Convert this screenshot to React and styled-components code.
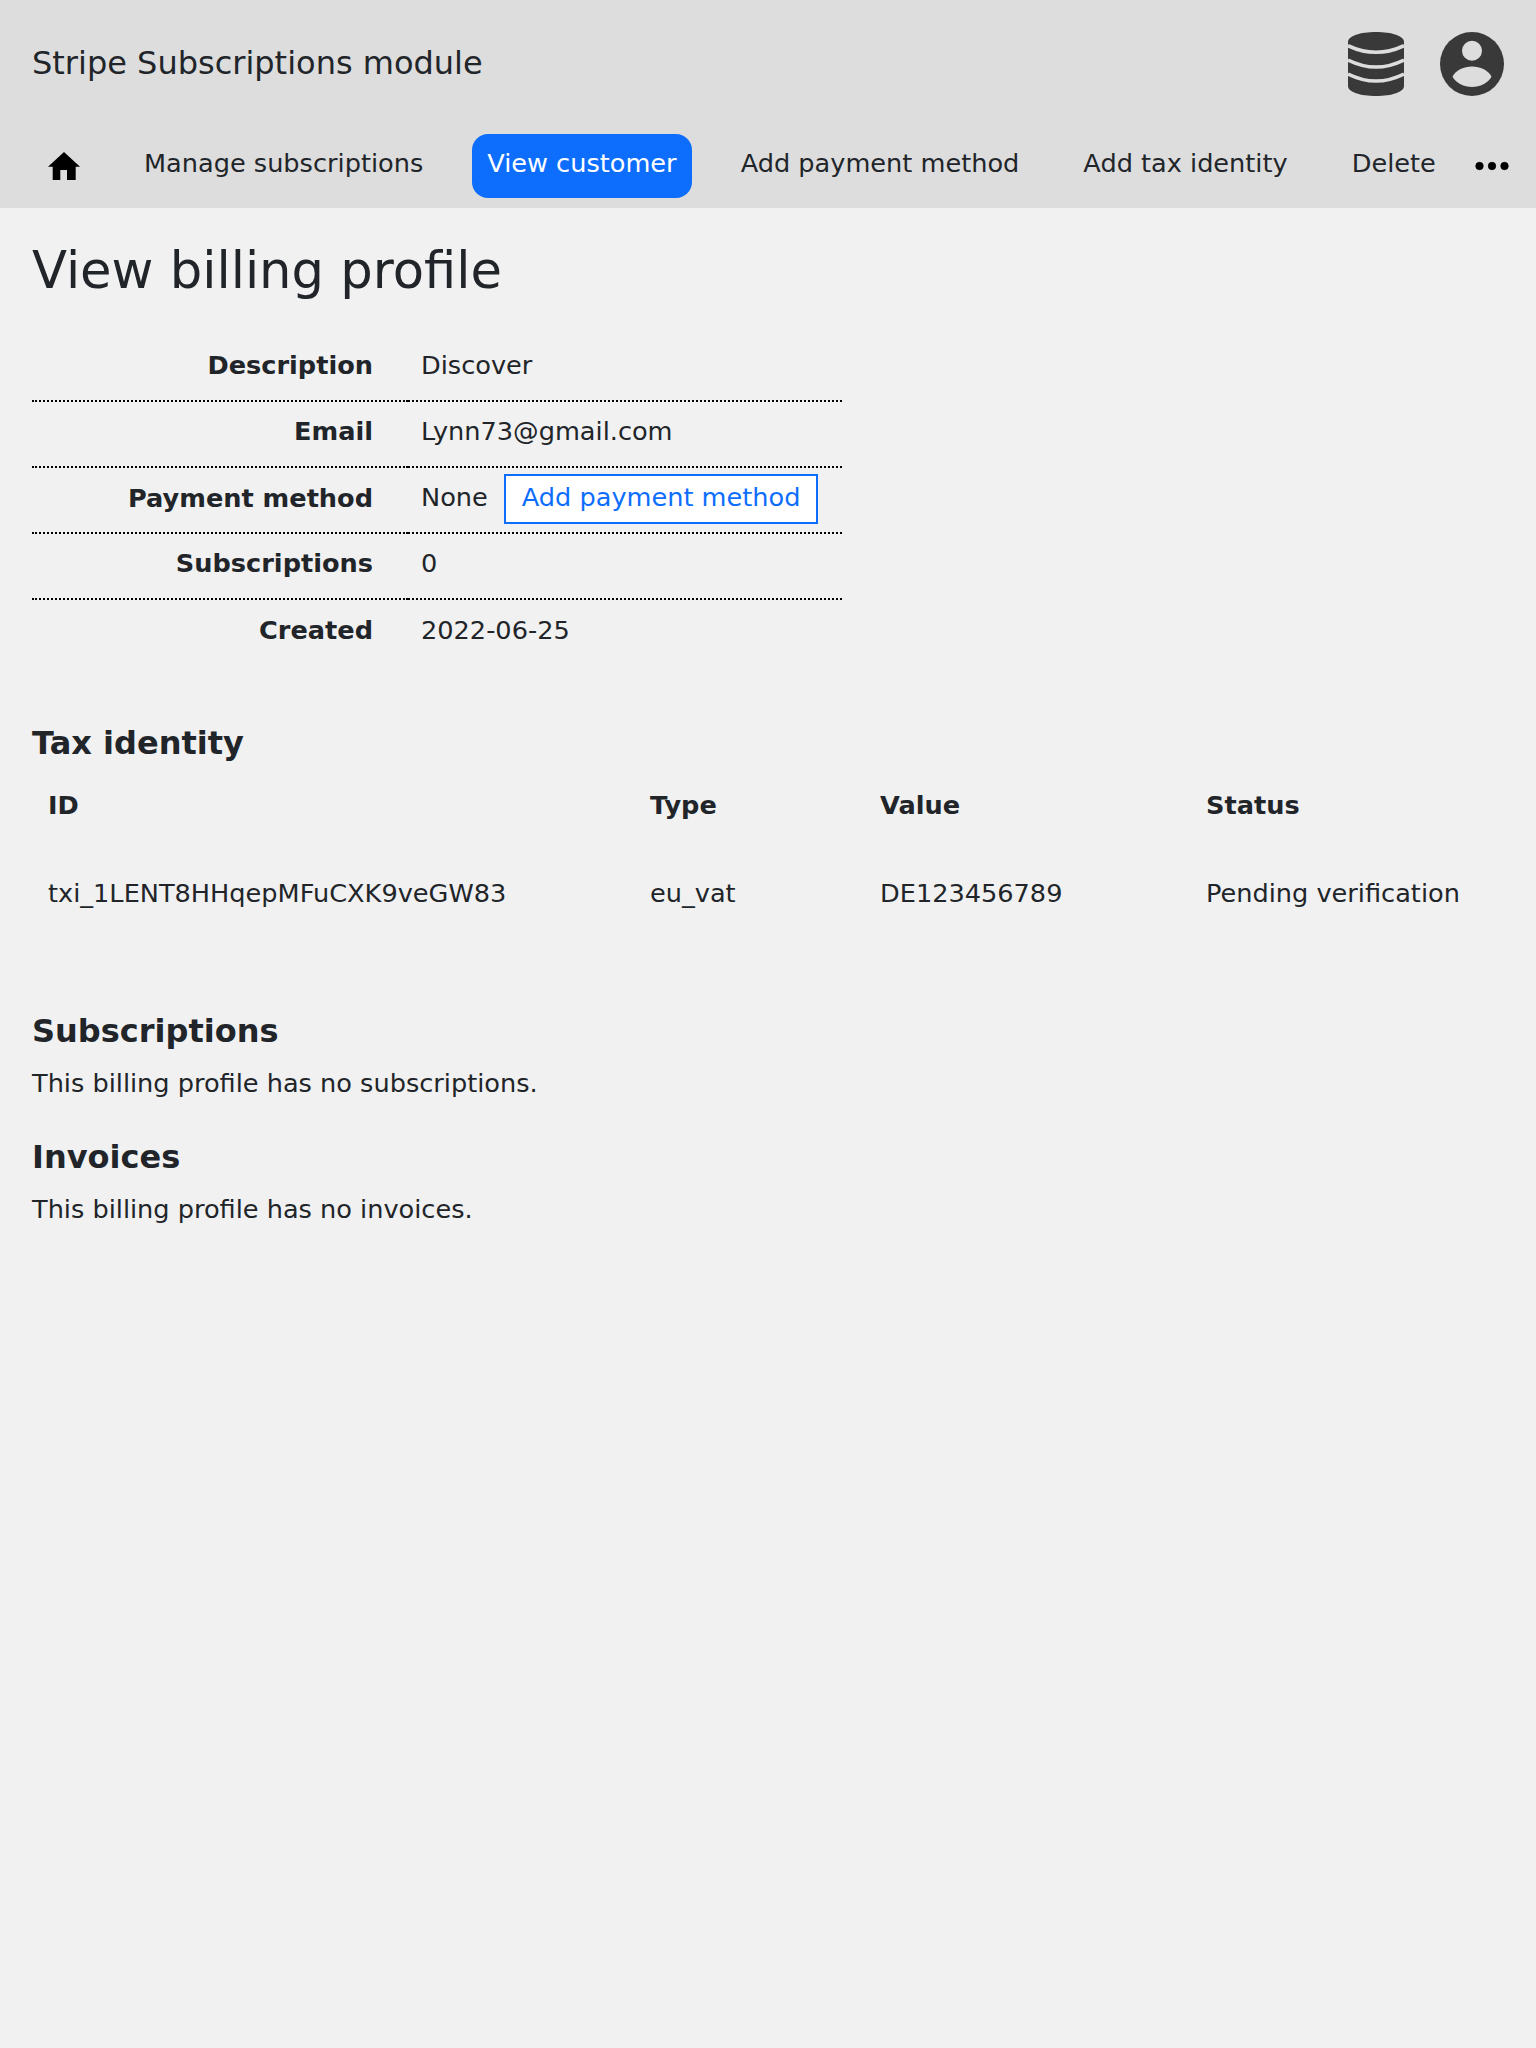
import React from "react";
import styled, { createGlobalStyle } from "styled-components";
import { BsThreeDots } from "react-icons/bs";

const GlobalStyle = createGlobalStyle`
  html, body {
    margin: 0;
    padding: 0;
    min-height: 2048px;
    background: #f1f1f1;
    color: #212529;
    font-family: "DejaVu Sans", sans-serif;
    font-size: 25.6px;
    line-height: 1.5;
  }
  * { box-sizing: border-box; }
`;

const Header = styled.header`
  background: #dddddd;
  height: 208px;
`;

const TopBar = styled.div`
  display: flex;
  align-items: center;
  justify-content: space-between;
  height: 128px;
  padding: 0 32px;
`;

const Brand = styled.div`
  padding-bottom: 2px;
  font-size: 32px;
`;

const TopIcons = styled.div`
  display: flex;
  align-items: center;
  gap: 36px;
  color: #393939;
  svg { display: block; }
`;

const Nav = styled.nav`
  display: flex;
  align-items: center;
  height: 76px;
  padding-left: 32px;
`;

const NavItem = styled.a`
  display: block;
  height: 64px;
  line-height: 58px;
  padding: 0 15px;
  margin-right: ${(p) => p.$gap}px;
  border-radius: 16px;
  white-space: nowrap;
  color: ${(p) => (p.$active ? "#fff" : "#212529")};
  background: ${(p) => (p.$active ? "#0d6efd" : "transparent")};
`;

const HomeLink = styled.a`
  display: flex;
  align-items: center;
  justify-content: center;
  width: 32px;
  margin: 0 49px 0 16px;
  color: #000;
`;

const MoreLink = styled.a`
  display: flex;
  margin-left: 21px;
  color: #000;
`;

const Main = styled.main`
  padding: 0 32px;
`;

const Title = styled.h1`
  margin: 0;
  padding-top: 32px;
  font-size: 51.2px;
  font-weight: 400;
  line-height: 1.2;
`;

const InfoTable = styled.table`
  width: 810px;
  margin-top: 34px;
  border-collapse: collapse;
`;

const InfoRow = styled.tr`
  height: 66px;
  border-bottom: 2px dotted #000;
  &:last-child { border-bottom: 0; }
`;

const InfoLabel = styled.th`
  width: 376px;
  padding: 0 35px ${(p) => p.$bottom ?? 6}px 0;
  text-align: right;
  font-weight: 700;
`;

const InfoValue = styled.td`
  padding: 0 0 ${(p) => p.$bottom ?? 6}px 13px;
`;

const OutlineButton = styled.a`
  display: inline-block;
  height: 50px;
  margin-left: 16px;
  padding: 0 16px;
  line-height: 42px;
  background: #fff;
  border: 2px solid #0d6efd;
  color: #0d6efd;
`;

const SectionTitle = styled.h2`
  margin: ${(p) => p.$top}px 0 0;
  font-size: 32px;
  font-weight: 700;
  line-height: 1.2;
`;

const TaxTable = styled.table`
  width: 100%;
  margin-top: 6px;
  border-collapse: collapse;
`;

const TaxHead = styled.th`
  height: 72px;
  padding: 0 16px;
  text-align: left;
  font-weight: 700;
  width: ${(p) => p.$width}px;
`;

const TaxCell = styled.td`
  height: 104px;
  padding: 0 16px;
`;

const Note = styled.p`
  margin: 14px 0 0;
`;

const HomeIcon = () => (
  <svg width="32" height="28" viewBox="0 0 32 28" fill="currentColor">
    <path d="M16 0L32 14.7H27.7V28H19V18H12.3V28H4.7V14.7H0Z" />
  </svg>
);

const DatabaseIcon = () => (
  <svg width="56" height="64" viewBox="0 0 56 64">
    <path
      fill="currentColor"
      d="M0 10C0 4 12 0 28 0S56 4 56 10V54C56 60 44 64 28 64S0 60 0 54Z"
    />
    <g fill="none" stroke="#dddddd" strokeWidth="3.5">
      <path d="M0 13.7Q28 27 56 13.7" />
      <path d="M0 28Q28 42 56 28" />
      <path d="M0 42Q28 56 56 42" />
    </g>
  </svg>
);

const UserIcon = () => (
  <svg width="64" height="64" viewBox="0 0 64 64">
    <circle cx="32" cy="32" r="32" fill="currentColor" />
    <circle cx="32" cy="18.7" r="10" fill="#dddddd" />
    <path
      fill="#dddddd"
      d="M12.5 44.7C16 38 24 34.5 32 34.5S48 38 51.5 44.7C48 51 40 55 32 55S16 51 12.5 44.7Z"
    />
  </svg>
);

export default function App() {
  return (
    <>
      <GlobalStyle />
      <Header>
        <TopBar>
          <Brand>Stripe Subscriptions module</Brand>
          <TopIcons>
            <DatabaseIcon />
            <UserIcon />
          </TopIcons>
        </TopBar>
        <Nav>
          <HomeLink><HomeIcon /></HomeLink>
          <NavItem $gap={34}>Manage subscriptions</NavItem>
          <NavItem $active $gap={34}>View customer</NavItem>
          <NavItem $gap={34}>Add payment method</NavItem>
          <NavItem $gap={34}>Add tax identity</NavItem>
          <NavItem $gap={0}>Delete</NavItem>
          <MoreLink><BsThreeDots size={40} strokeWidth={0.3} /></MoreLink>
        </Nav>
      </Header>
      <Main>
        <Title>View billing profile</Title>
        <InfoTable>
          <tbody>
            <InfoRow><InfoLabel>Description</InfoLabel><InfoValue>Discover</InfoValue></InfoRow>
            <InfoRow><InfoLabel>Email</InfoLabel><InfoValue>Lynn73@gmail.com</InfoValue></InfoRow>
            <InfoRow>
              <InfoLabel $bottom={5}>Payment method</InfoLabel>
              <InfoValue $bottom={2}>None<OutlineButton>Add payment method</OutlineButton></InfoValue>
            </InfoRow>
            <InfoRow><InfoLabel>Subscriptions</InfoLabel><InfoValue>0</InfoValue></InfoRow>
            <InfoRow><InfoLabel>Created</InfoLabel><InfoValue>2022-06-25</InfoValue></InfoRow>
          </tbody>
        </InfoTable>
        <SectionTitle $top={59}>Tax identity</SectionTitle>
        <TaxTable>
          <thead>
            <tr>
              <TaxHead $width={602}>ID</TaxHead>
              <TaxHead $width={230}>Type</TaxHead>
              <TaxHead $width={326}>Value</TaxHead>
              <TaxHead>Status</TaxHead>
            </tr>
          </thead>
          <tbody>
            <tr>
              <TaxCell>txi_1LENT8HHqepMFuCXK9veGW83</TaxCell>
              <TaxCell>eu_vat</TaxCell>
              <TaxCell>DE123456789</TaxCell>
              <TaxCell>Pending verification</TaxCell>
            </tr>
          </tbody>
        </TaxTable>
        <SectionTitle $top={67}>Subscriptions</SectionTitle>
        <Note>This billing profile has no subscriptions.</Note>
        <SectionTitle $top={35}>Invoices</SectionTitle>
        <Note>This billing profile has no invoices.</Note>
      </Main>
    </>
  );
}
